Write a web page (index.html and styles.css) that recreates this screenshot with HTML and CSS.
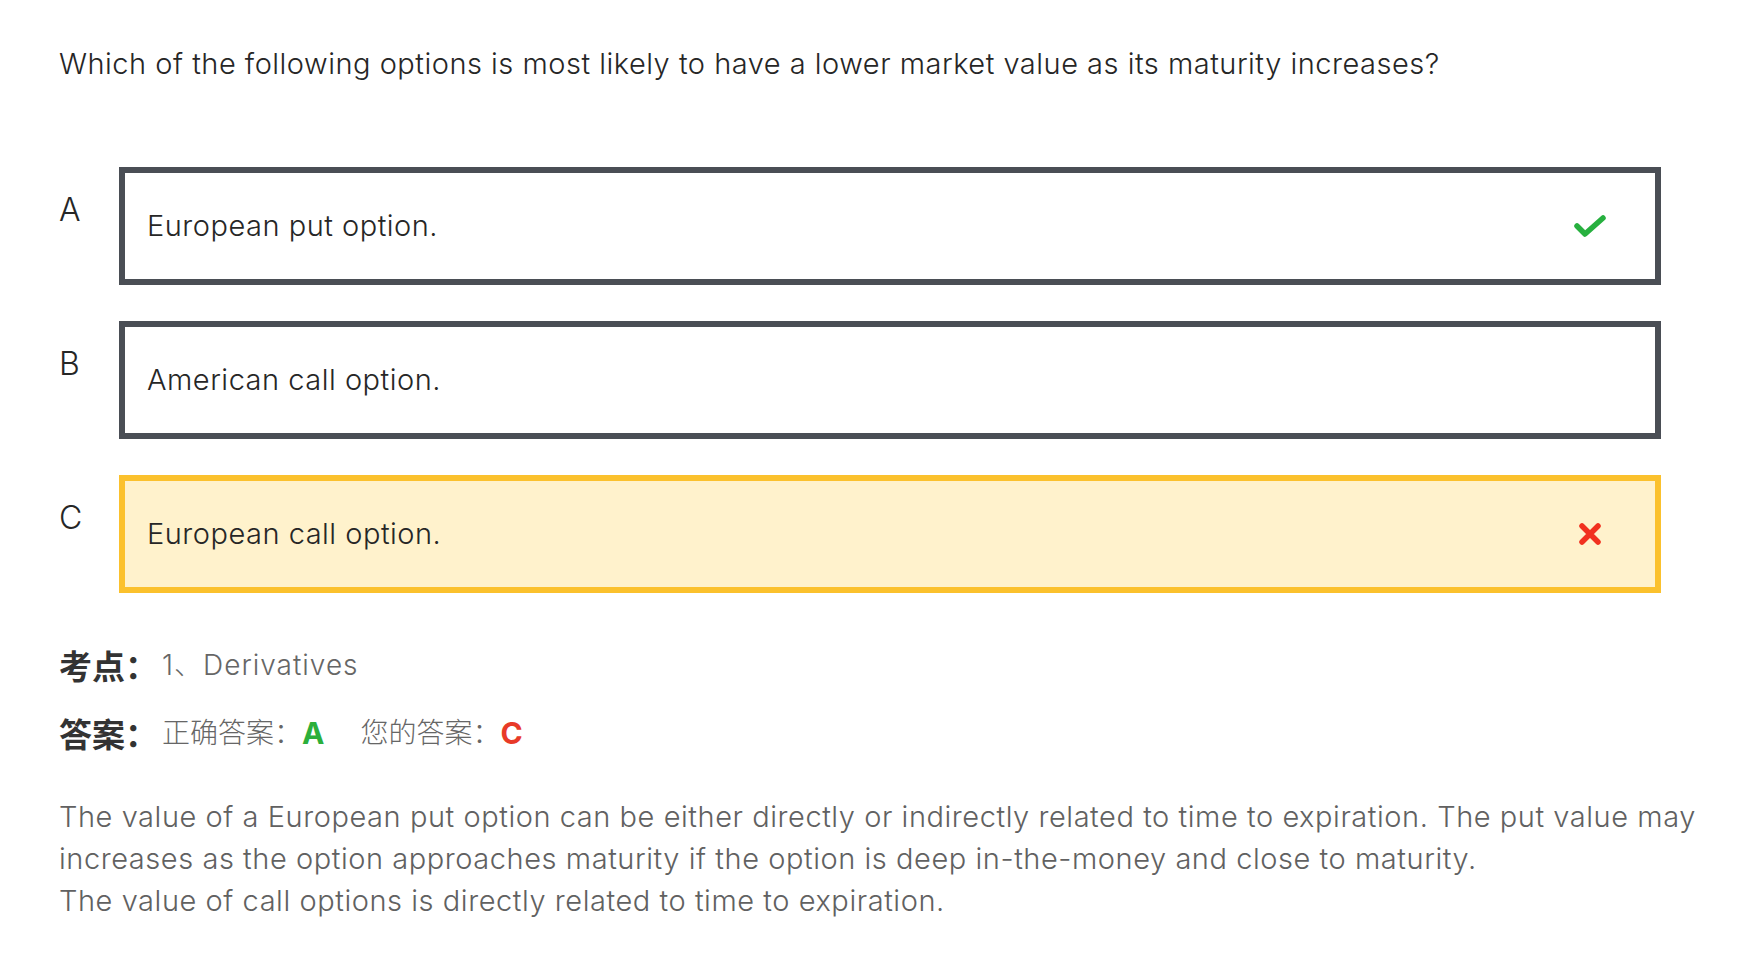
FILE: index.html
```html
<!DOCTYPE html>
<html lang="zh">
<head>
<meta charset="utf-8">
<title>Question</title>
<link rel="stylesheet" href="styles.css">
</head>
<body>
<main class="page">
  <p class="question">Which of the following options is most likely to have a lower market value as its maturity increases?</p>

  <div class="options">
    <div class="option">
      <span class="option-key">A</span>
      <div class="option-box">
        <span class="option-text">European put option.</span>
        <svg class="mark" width="34" height="26" viewBox="0 0 34 26"><polyline points="4,13 12,21 30,5" fill="none" stroke="#27b03f" stroke-width="5.5" stroke-linecap="round" stroke-linejoin="round"/></svg>
      </div>
    </div>
    <div class="option">
      <span class="option-key">B</span>
      <div class="option-box">
        <span class="option-text">American call option.</span>
      </div>
    </div>
    <div class="option">
      <span class="option-key">C</span>
      <div class="option-box option-box--chosen">
        <span class="option-text">European call option.</span>
        <svg class="mark" width="34" height="26" viewBox="0 0 34 26"><path d="M9 5 L25 21 M25 5 L9 21" fill="none" stroke="#f1311f" stroke-width="5.5" stroke-linecap="round"/></svg>
      </div>
    </div>
  </div>

  <div class="meta">
    <div class="meta-row">
      <span class="meta-label">考点：</span>
      <span class="meta-value meta-value--topic">1、Derivatives</span>
    </div>
    <div class="meta-row">
      <span class="meta-label">答案：</span>
      <span class="meta-value">正确答案：</span><span class="ans ans--right">A</span>
      <span class="meta-value meta-value--gap">您的答案：</span><span class="ans ans--wrong">C</span>
    </div>
  </div>

  <p class="explain">The value of a European put option can be either directly or indirectly related to time to expiration. The put value may increases as the option approaches maturity if the option is deep in-the-money and close to maturity.<br>The value of call options is directly related to time to expiration.</p>
</main>
</body>
</html>
```

FILE: styles.css
```css
html, body {
  margin: 0;
  padding: 0;
  background: #ffffff;
}

.page {
  padding: 43px 40px 40px 59px;
  font-family: "Inter", "Noto Sans CJK JP", sans-serif;
  font-weight: 300;
  color: #333333;
}

.question {
  margin: 0;
  font-size: 29px;
  line-height: 42px;
  letter-spacing: 0.5px;
  color: #262626;
}

.options {
  margin-top: 82px;
  display: flex;
  flex-direction: column;
  gap: 36px;
  width: 1602px;
}

.option {
  display: flex;
  align-items: flex-start;
}

.option-key {
  width: 60px;
  flex: none;
  padding-top: 22px;
  font-size: 32px;
  line-height: 42px;
  color: #262626;
}

.option-box {
  flex: 1;
  box-sizing: border-box;
  height: 118px;
  border: 6px solid #4a4e55;
  background: #ffffff;
  display: flex;
  align-items: center;
  justify-content: space-between;
  padding: 0 48px 0 22px;
}

.option-box--chosen {
  border-color: #fbc12d;
  background: #fff2cc;
}

.option-text {
  font-size: 29px;
  line-height: 42px;
  letter-spacing: 0.5px;
  color: #262626;
}

.mark {
  display: block;
  flex: none;
}

.meta {
  margin-top: 51px;
  display: flex;
  flex-direction: column;
  gap: 26px;
}

.meta-row {
  display: flex;
  align-items: center;
  line-height: 42px;
}

.meta-label {
  font-family: "Noto Sans CJK SC", sans-serif;
  font-weight: 700;
  font-size: 33px;
  color: #333333;
  margin-right: 4px;
}

.meta-value {
  font-family: "Inter", "Noto Sans CJK SC", sans-serif;
  font-size: 28px;
  letter-spacing: 0;
  color: #666666;
}

.meta-value--topic {
  letter-spacing: 1px;
}

.meta-value--gap {
  margin-left: 36px;
}

.ans {
  font-family: "Inter", sans-serif;
  font-weight: 700;
  font-size: 30px;
  margin-left: 0;
}

.ans--right {
  color: #2caf3b;
}

.ans--wrong {
  color: #e83a28;
}

.explain {
  margin: 42px 0 0;
  font-size: 29px;
  line-height: 42px;
  letter-spacing: 0.55px;
  color: #616161;
}
```
